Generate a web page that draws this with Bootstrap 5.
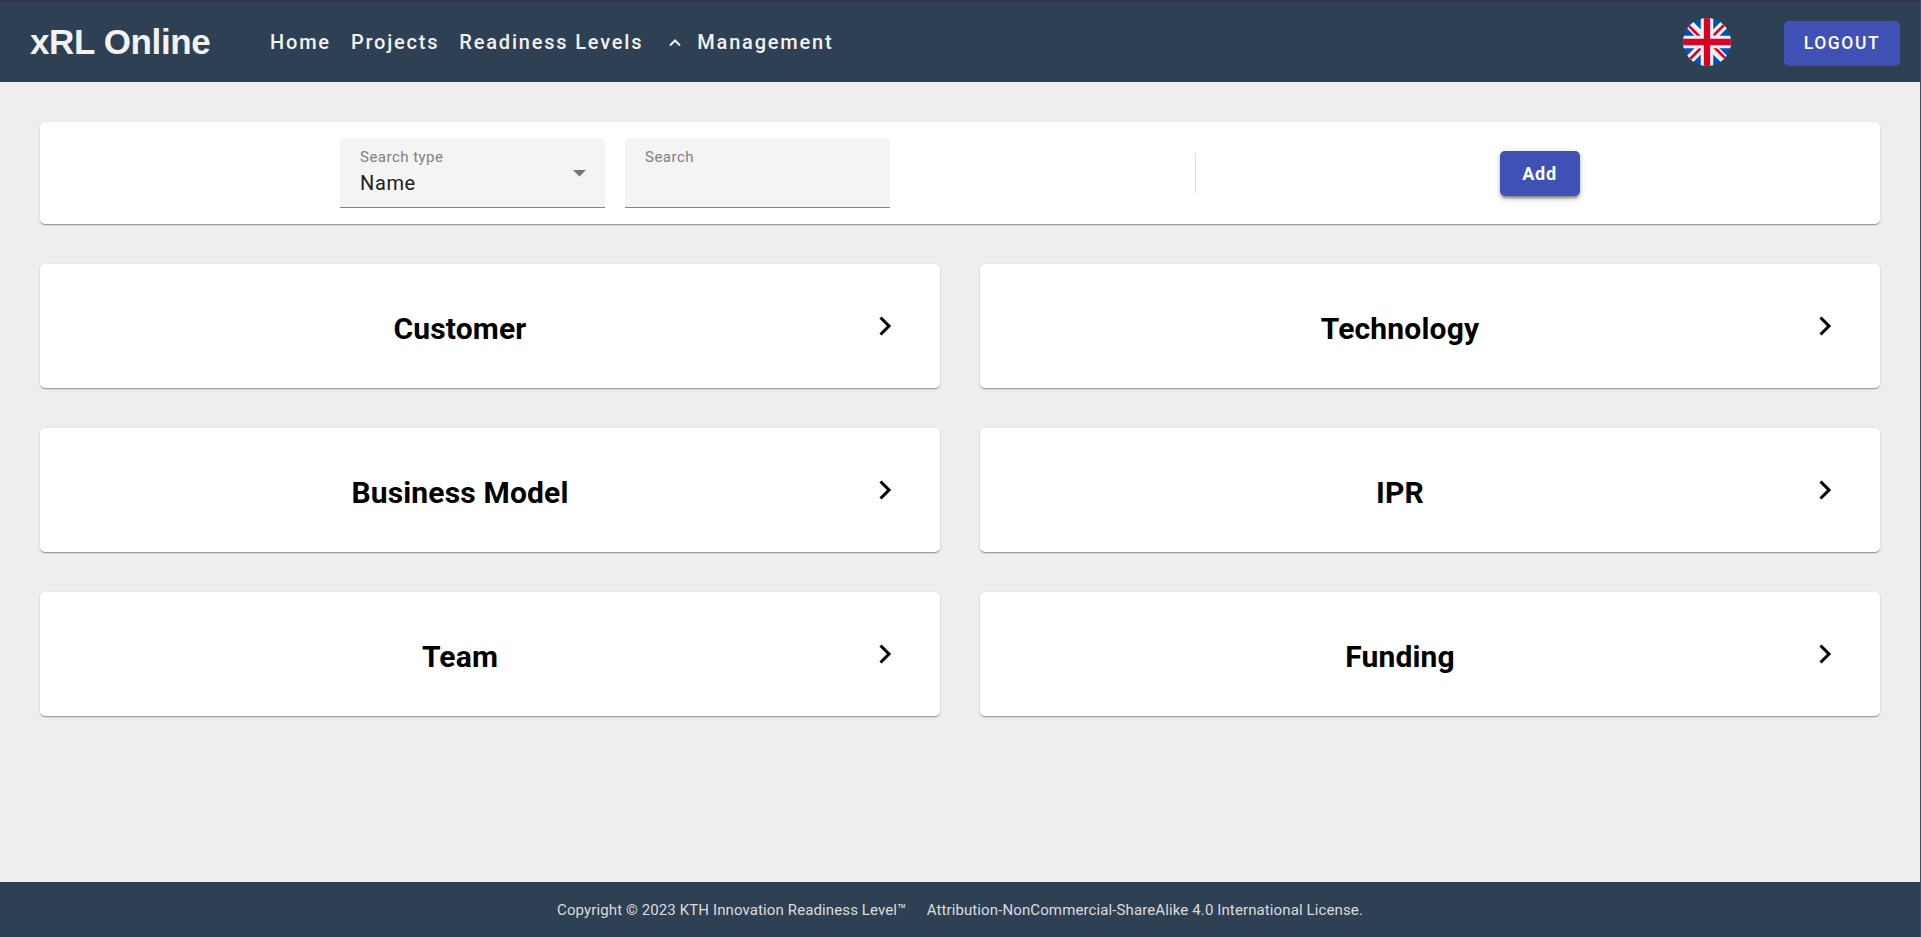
<!DOCTYPE html>
<html lang="en">
<head>
<meta charset="utf-8">
<meta name="viewport" content="width=device-width, initial-scale=1">
<title>xRL Online</title>
<link href="https://cdn.jsdelivr.net/npm/bootstrap@5.3.0/dist/css/bootstrap.min.css" rel="stylesheet">
<style>
body { font-family: Roboto, sans-serif; background: #eee; color: #000; overflow: hidden; border-right: 1px solid #4a4468; }
.topbar { height: 82px; background: #2e4053; border-top: 2px solid #323544; padding: 0 20px 0 30px; }
.brand-name { font: 700 35px/1 "Liberation Sans", sans-serif; color: #f2f2f2; width: 240px; padding-bottom: 2px; letter-spacing: -.38px; }
.topbar .nav { gap: 20px; }
.topbar .nav-link { font-size: 20px; font-weight: 500; line-height: 24px; letter-spacing: 1.8px; color: #f2f2f2; padding: 0; }
.caret-up { margin: 0 15px 0 5px; }
.flag { margin-right: 53px; }
.logout { width: 116px; height: 45px; border-radius: 5px; font-size: 17.5px; font-weight: 500; letter-spacing: 1.56px; margin-top: 2px; }
.indigo, .indigo:hover { background: #3f51b5; color: #fff; border: 0; padding: 0; }
.panel { background: #fff; border-radius: 5px; box-shadow: 0 2px 1px -1px rgba(0,0,0,.2), 0 1px 1px rgba(0,0,0,.14), 0 1px 3px rgba(0,0,0,.12); }
.page { padding: 40px; gap: 40px; }
.toolbar { height: 102px; }
.filters { width: 1155px; gap: 20px; padding-right: 5px; }
.field { width: 265px; height: 70px; background: #f4f4f4; border-bottom: 1px solid #858585; border-radius: 5px 5px 0 0; padding: 10px 19px 0 20px; }
.field-label { font-size: 15px; line-height: 18px; letter-spacing: .48px; color: #808080; }
.field-value { font-size: 20px; line-height: 30px; letter-spacing: .62px; color: #212121; margin-top: 2px; }
.drop-arrow { margin-top: 22px; }
.rule { width: 1px; height: 40px; background: #dfdfdf; }
.add { width: 80px; height: 45px; border-radius: 5px; font-size: 18px; font-weight: 700; letter-spacing: .75px; padding-right: 1px; margin-left: 4px; box-shadow: 0 3.75px 1.25px -2.5px rgba(0,0,0,.2), 0 2.5px 2.5px rgba(0,0,0,.14), 0 1.25px 6.25px rgba(0,0,0,.12), 0 3px 6px rgba(0,0,0,.1); }
.tiles { display: grid; grid-template-columns: repeat(2, minmax(0, 1fr)); gap: 40px; }
.tile { height: 124px; }
.tile h2 { font-size: 30px; font-weight: 700; line-height: 36px; margin: 6px -1px 0 0; width: 840px; letter-spacing: .17px; }
.foot { height: 55px; background: #2e4053; color: #dcdcdc; font-size: 15px; letter-spacing: .115px; gap: 20px; padding-top: 1px; }
</style>
</head>
<body class="d-flex flex-column vh-100">
<nav class="topbar d-flex align-items-center flex-shrink-0">
  <div class="brand-name">xRL Online</div>
  <div class="nav flex-grow-1 align-items-center">
    <a class="nav-link" href="#">Home</a>
    <a class="nav-link" href="#">Projects</a>
    <a class="nav-link" href="#">Readiness Levels</a>
    <a class="nav-link d-flex align-items-center" href="#">
      <svg class="caret-up" width="14" height="12" viewBox="0 0 14 12" fill="none" stroke="#f2f2f2" stroke-width="2"><path d="M2 9.500l5-5 5 5"/></svg>Management</a>
  </div>
  <svg class="flag" width="48" height="48" viewBox="0 0 48 48">
    <clipPath id="disc"><circle cx="24" cy="24" r="24"/></clipPath>
    <g clip-path="url(#disc)">
      <rect width="48" height="48" fill="#0052b4"/>
      <path d="M0 0L48 48M48 0L0 48" stroke="#f0f0f0" stroke-width="9"/>
      <path d="M5 7L20 22M28 20L43 5M28 26L43 41M20 28L5 43" stroke="#d80027" stroke-width="2.6"/>
      <path d="M24 0V48M0 24H48" stroke="#f0f0f0" stroke-width="12.5"/>
      <path d="M24 0V48M0 24H48" stroke="#d80027" stroke-width="6.3"/>
    </g>
  </svg>
  <button class="btn indigo logout">LOGOUT</button>
</nav>
<main class="page d-flex flex-column flex-grow-1">
  <section class="panel toolbar d-flex align-items-center">
    <div class="filters d-flex justify-content-center">
      <div class="field d-flex justify-content-between">
        <div>
          <div class="field-label">Search type</div>
          <div class="field-value">Name</div>
        </div>
        <svg class="drop-arrow" width="13" height="7" viewBox="0 0 13 7"><path d="M0 0H13L6.5 6.5z" fill="#757575"/></svg>
      </div>
      <div class="field"><div class="field-label">Search</div></div>
    </div>
    <div class="rule"></div>
    <div class="flex-grow-1 d-flex justify-content-center"><button class="btn indigo add">Add</button></div>
  </section>
  <section class="tiles">
    <a class="panel tile d-flex align-items-center text-black text-decoration-none" href="#"><h2 class="text-center">Customer</h2><svg class="flex-shrink-0" width="13" height="20" viewBox="0 0 13 20" fill="none" stroke="#000" stroke-width="3"><path d="M1.5 1.5L10 10l-8.500 8.500"/></svg></a>
    <a class="panel tile d-flex align-items-center text-black text-decoration-none" href="#"><h2 class="text-center">Technology</h2><svg class="flex-shrink-0" width="13" height="20" viewBox="0 0 13 20" fill="none" stroke="#000" stroke-width="3"><path d="M1.5 1.5L10 10l-8.500 8.500"/></svg></a>
    <a class="panel tile d-flex align-items-center text-black text-decoration-none" href="#"><h2 class="text-center">Business Model</h2><svg class="flex-shrink-0" width="13" height="20" viewBox="0 0 13 20" fill="none" stroke="#000" stroke-width="3"><path d="M1.5 1.5L10 10l-8.500 8.500"/></svg></a>
    <a class="panel tile d-flex align-items-center text-black text-decoration-none" href="#"><h2 class="text-center">IPR</h2><svg class="flex-shrink-0" width="13" height="20" viewBox="0 0 13 20" fill="none" stroke="#000" stroke-width="3"><path d="M1.5 1.5L10 10l-8.500 8.500"/></svg></a>
    <a class="panel tile d-flex align-items-center text-black text-decoration-none" href="#"><h2 class="text-center">Team</h2><svg class="flex-shrink-0" width="13" height="20" viewBox="0 0 13 20" fill="none" stroke="#000" stroke-width="3"><path d="M1.5 1.5L10 10l-8.500 8.500"/></svg></a>
    <a class="panel tile d-flex align-items-center text-black text-decoration-none" href="#"><h2 class="text-center">Funding</h2><svg class="flex-shrink-0" width="13" height="20" viewBox="0 0 13 20" fill="none" stroke="#000" stroke-width="3"><path d="M1.5 1.5L10 10l-8.500 8.500"/></svg></a>
  </section>
</main>
<footer class="foot d-flex justify-content-center align-items-center flex-shrink-0">
  <span>Copyright © 2023 KTH Innovation Readiness Level™</span>
  <span>Attribution-NonCommercial-ShareAlike 4.0 International License.</span>
</footer>
<script src="https://cdn.jsdelivr.net/npm/bootstrap@5.3.0/dist/js/bootstrap.bundle.min.js"></script>
</body>
</html>
